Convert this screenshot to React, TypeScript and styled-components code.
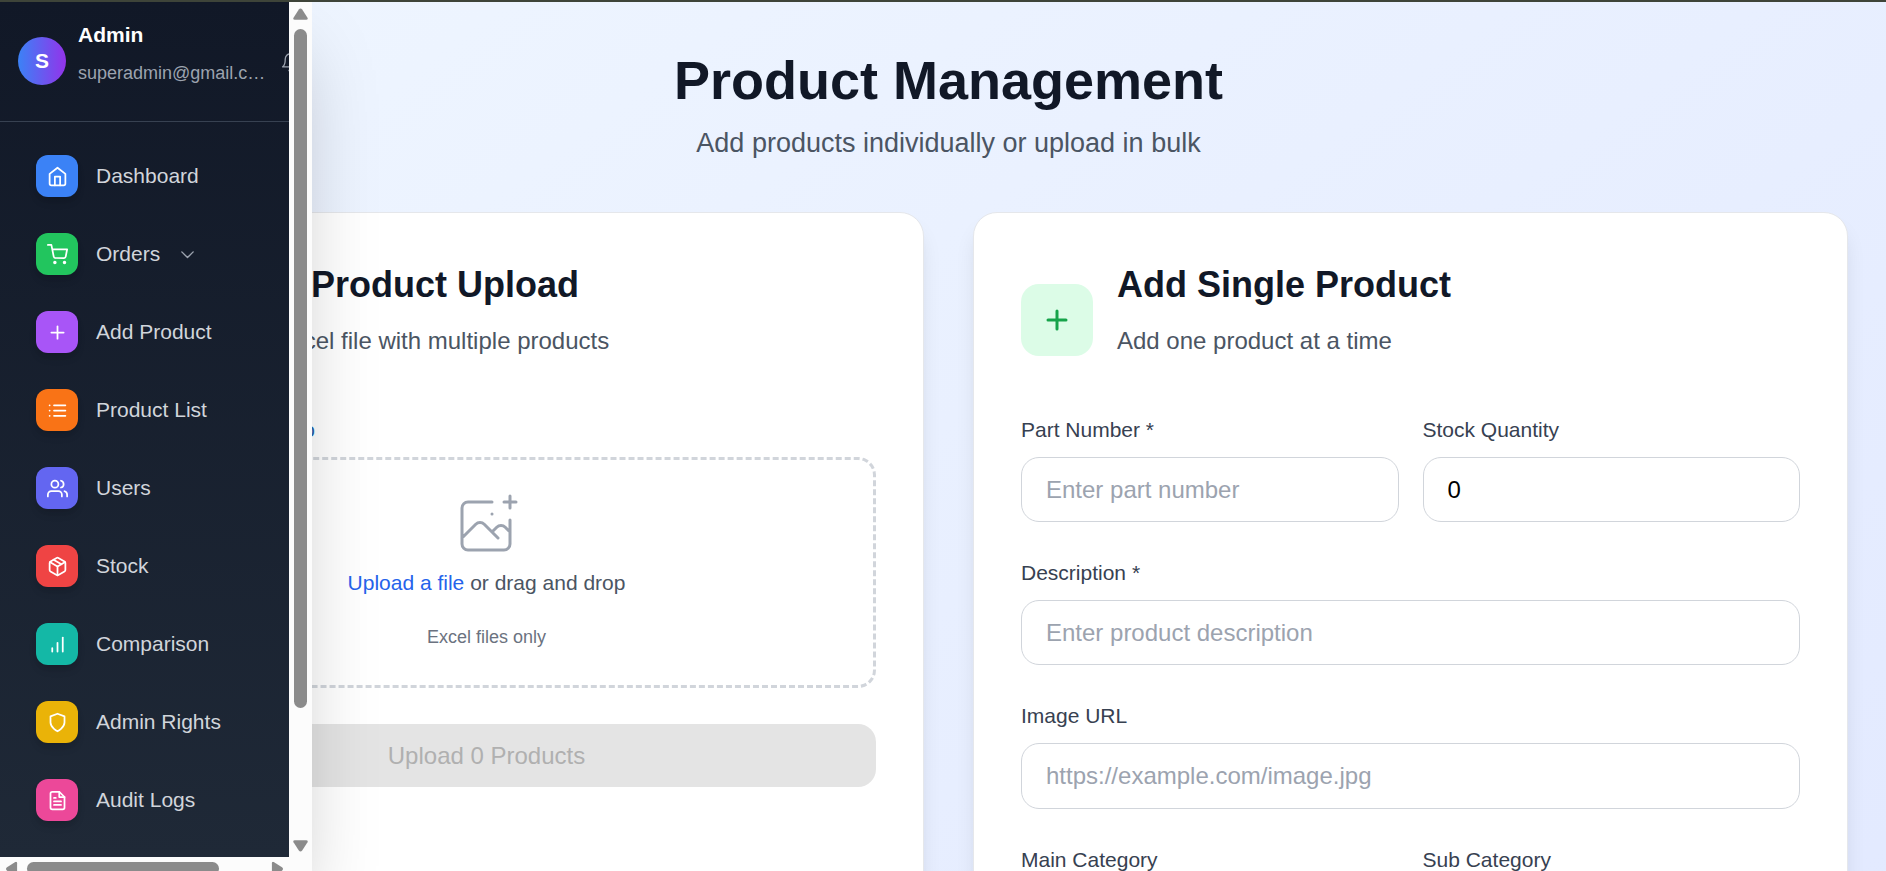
import React from "react";
import styled, { createGlobalStyle, css } from "styled-components";
import {
  FiHome,
  FiShoppingCart,
  FiPlus,
  FiList,
  FiUsers,
  FiPackage,
  FiBarChart,
  FiShield,
  FiFileText,
  FiBell,
} from "react-icons/fi";

const GlobalStyle = createGlobalStyle`
  *, *::before, *::after { box-sizing: border-box; }
  body {
    margin: 0;
    overflow: hidden;
    font-family: "Liberation Sans", Arial, sans-serif;
    font-size: 24px;
    line-height: 36px;
  }
  h1, h2, p { margin: 0; }
`;

const Page = styled.div`
  position: relative;
  height: 871px;
  overflow: hidden;
  border-top: 2px solid #3e4439;
`;

const Main = styled.main`
  height: 1400px;
  padding: 47.5px 38px 0 49px;
  background: linear-gradient(to bottom right, #eff6ff, #e0e7ff);
`;

const Header = styled.header`
  text-align: center;
  height: 162.5px;
`;

const PageTitle = styled.h1`
  font-size: 54px;
  line-height: 60px;
  font-weight: 700;
  color: #111827;
`;

const PageSubtitle = styled.p`
  margin-top: 12.5px;
  font-size: 27px;
  line-height: 42px;
  color: #4b5563;
`;

const Columns = styled.div`
  display: grid;
  grid-template-columns: 1fr 1fr;
  gap: 49px;
`;

const Card = styled.section`
  height: 1150px;
  padding: 48px 47px;
  background: #fff;
  border: 1px solid #e5e7eb;
  border-radius: 24px;
  box-shadow: 0 15px 22px -4px rgba(0, 0, 0, 0.1), 0 6px 9px -6px rgba(0, 0, 0, 0.1);
`;

const CardHeader = styled.div`
  display: flex;
  align-items: center;
  gap: 24px;
  height: 118px;
  margin-bottom: 36px;
`;

const Badge = styled.div<{ $bg: string; $fg: string }>`
  display: flex;
  align-items: center;
  justify-content: center;
  width: 72px;
  height: 72px;
  flex: none;
  border-radius: 18px;
  background: ${(p) => p.$bg};
  color: ${(p) => p.$fg};
`;

const CardTitle = styled.h2<{ $indent?: number }>`
  padding-left: ${(p) => p.$indent ?? 0}px;
  font-size: 36px;
  line-height: 48px;
  font-weight: 700;
  color: #111827;
`;

const CardText = styled.p`
  margin-top: 14px;
  color: #4b5563;
`;

const CardHeading = styled.div`
  height: 118px;
`;

const labelText = css`
  display: block;
  font-size: 21px;
  line-height: 30px;
  color: #374151;
`;

const Label = styled.label`
  ${labelText}
  margin-bottom: 12px;
`;

const FileLabel = styled.label`
  ${labelText}
  width: 218px;
  margin-bottom: 12px;
  color: #2563a8;
  text-align: right;
  white-space: nowrap;
`;

const DropZone = styled.div`
  display: flex;
  flex-direction: column;
  align-items: center;
  height: 231px;
  padding-top: 30px;
  border: 3px dashed #d1d5db;
  border-radius: 18px;
`;

const DropPicture = styled.svg`
  display: block;
  flex: none;
  margin-right: 1px;
`;

const DropText = styled.p`
  margin-top: 6px;
  font-size: 21px;
  line-height: 30px;
  color: #4b5563;

  span { color: #2563eb; }
`;

const DropHint = styled.p`
  margin-top: 27px;
  font-size: 18px;
  line-height: 24px;
  color: #6b7280;
`;

const UploadButton = styled.button`
  display: block;
  width: 100%;
  height: 63px;
  margin-top: 36px;
  padding: 0;
  border: 0;
  border-radius: 18px;
  background: #e4e4e4;
  color: #b0b0b0;
  font: inherit;
`;

const FieldRow = styled.div`
  display: grid;
  grid-template-columns: 1fr 1fr;
  gap: 24px;
`;

const Field = styled.div`
  margin-bottom: 36px;
`;

const Input = styled.input`
  display: block;
  width: 100%;
  height: 65.2px;
  padding: 0 24px;
  border: 1px solid #d1d5db;
  border-radius: 18px;
  background: #fff;
  color: #000;
  font: inherit;
  outline: none;

  &::placeholder { color: #9ca3af; opacity: 1; }
`;

const Drawer = styled.aside`
  position: absolute;
  top: 0;
  left: 0;
  width: 312px;
  height: 882px;
  display: grid;
  grid-template-columns: 289px 23px;
  grid-template-rows: 855px 27px;
  background: #fcfcfc;
  box-shadow: 0 37px 75px -18px rgba(0, 0, 0, 0.25);
`;

const DrawerBody = styled.div`
  overflow: hidden;
  background: linear-gradient(to bottom, #111827, #1f2937);
`;

const Profile = styled.div`
  display: flex;
  width: 330px;
  height: 120px;
  padding: 17px 0 0 18px;
  border-bottom: 1px solid #374151;
`;

const Avatar = styled.div`
  display: flex;
  align-items: center;
  justify-content: center;
  width: 48px;
  height: 48px;
  margin: 18px 12px 0 0;
  border-radius: 50%;
  background: linear-gradient(to right, #3b82f6, #9333ea);
  color: #fff;
  font-size: 21px;
  font-weight: 700;
`;

const ProfileName = styled.p`
  font-size: 21px;
  line-height: 32px;
  font-weight: 700;
  color: #fff;
`;

const ProfileMail = styled.p`
  width: 188px;
  margin-top: 8px;
  font-size: 18px;
  line-height: 28px;
  color: #9ca3af;
  overflow: hidden;
  text-overflow: ellipsis;
  white-space: nowrap;
`;

const Bell = styled.div`
  margin: 33px 0 0 14px;
  color: #9ca3af;
  line-height: 0;
`;

const Nav = styled.nav`
  display: flex;
  flex-direction: column;
  gap: 12px;
  padding: 21px 18px;
`;

const NavItem = styled.a`
  display: flex;
  align-items: center;
  height: 66px;
  padding: 0 18px;
  color: #d1d5db;
  font-size: 21px;
`;

const NavIcon = styled.span<{ $bg: string }>`
  display: flex;
  align-items: center;
  justify-content: center;
  width: 42px;
  height: 42px;
  margin-right: 18px;
  border-radius: 12px;
  background: ${(p) => p.$bg};
  color: #fff;
  box-shadow: 0 6px 9px -1px rgba(0, 0, 0, 0.1), 0 3px 6px -2px rgba(0, 0, 0, 0.1);
`;

const Chevron = styled.span`
  display: flex;
  margin-left: 16.5px;
  color: #9ca3af;
`;

const VerticalBar = styled.div`
  display: flex;
  flex-direction: column;
  align-items: center;
  padding-top: 6px;
`;

const VerticalThumb = styled.div`
  width: 13px;
  height: 679px;
  margin: 9px 0 132px;
  border-radius: 7px;
  background: #8b8b8b;
`;

const HorizontalBar = styled.div`
  display: flex;
  align-items: center;
  padding: 0 0 4px 4px;
`;

const HorizontalThumb = styled.div`
  width: 192px;
  height: 13px;
  margin: 0 51px 0 8px;
  border-radius: 7px;
  background: #8b8b8b;
`;

const ArrowIcon = styled.svg<{ $turn: number }>`
  display: block;
  flex: none;
  transform: rotate(${(p) => p.$turn}deg);
`;

const Arrow = ({ turn }: { turn: number }) => (
  <ArrowIcon $turn={turn} width="15" height="12" viewBox="0 0 15 12">
    <path d="M5.8 1.5L0.5 9.8Q-0.3 11.7 1.8 11.7H13.2Q15.3 11.7 14.5 9.8L9.2 1.5Q7.5 -0.5 5.8 1.5Z" fill="#8b8b8b" />
  </ArrowIcon>
);

const UploadPicture = () => (
  <DropPicture width="72" height="72" viewBox="0 0 48 48" fill="none" stroke="#9ca3af" strokeWidth="2" strokeLinecap="round" strokeLinejoin="round">
    <path d="M28 8H12a4 4 0 00-4 4v20m32-12v8m0 0v8a4 4 0 01-4 4H12a4 4 0 01-4-4v-4m32-4l-3.172-3.172a4 4 0 00-5.656 0L28 28M8 32l9.172-9.172a4 4 0 015.656 0L28 28m0 0l4 4m4-24h8m-4-4v8m-12 4h.02" />
  </DropPicture>
);

const AddIcon = () => (
  <svg width="36" height="36" viewBox="0 0 24 24" fill="none" stroke="currentColor" strokeWidth="2" strokeLinecap="round">
    <path d="M12 6v12M6 12h12" />
  </svg>
);

const ExpandIcon = () => (
  <svg width="21" height="21" viewBox="0 0 24 24" fill="none" stroke="currentColor" strokeWidth="1.6" strokeLinecap="round" strokeLinejoin="round">
    <path d="M18.5 9L12 15.5L5.5 9" />
  </svg>
);

const navItems = [
  { label: "Dashboard", color: "#3b82f6", Icon: FiHome },
  { label: "Orders", color: "#22c55e", Icon: FiShoppingCart, expandable: true },
  { label: "Add Product", color: "#a855f7", Icon: FiPlus },
  { label: "Product List", color: "#f97316", Icon: FiList },
  { label: "Users", color: "#6366f1", Icon: FiUsers },
  { label: "Stock", color: "#ef4444", Icon: FiPackage },
  { label: "Comparison", color: "#14b8a6", Icon: FiBarChart },
  { label: "Admin Rights", color: "#eab308", Icon: FiShield },
  { label: "Audit Logs", color: "#ec4899", Icon: FiFileText },
];

const Sidebar = () => (
  <Drawer>
    <DrawerBody>
      <Profile>
        <Avatar>S</Avatar>
        <div>
          <ProfileName>Admin</ProfileName>
          <ProfileMail>superadmin@gmail.com</ProfileMail>
        </div>
        <Bell>
          <FiBell size={21} strokeWidth={1.5} />
        </Bell>
      </Profile>
      <Nav>
        {navItems.map(({ label, color, Icon, expandable }) => (
          <NavItem key={label}>
            <NavIcon $bg={color}>
              <Icon size={21} />
            </NavIcon>
            {label}
            {expandable && (
              <Chevron>
                <ExpandIcon />
              </Chevron>
            )}
          </NavItem>
        ))}
      </Nav>
    </DrawerBody>
    <VerticalBar>
      <Arrow turn={0} />
      <VerticalThumb />
      <Arrow turn={180} />
    </VerticalBar>
    <HorizontalBar>
      <Arrow turn={-90} />
      <HorizontalThumb />
      <Arrow turn={90} />
    </HorizontalBar>
  </Drawer>
);

type TextFieldProps = { label: string; placeholder?: string; value?: string };

const TextField = ({ label, placeholder, value }: TextFieldProps) => (
  <Field>
    <Label>{label}</Label>
    <Input placeholder={placeholder} defaultValue={value} />
  </Field>
);

export default function App() {
  return (
    <>
      <GlobalStyle />
      <Page>
        <Main>
          <Header>
            <PageTitle>Product Management</PageTitle>
            <PageSubtitle>Add products individually or upload in bulk</PageSubtitle>
          </Header>
          <Columns>
            <Card>
              <CardHeader>
                <Badge $bg="#dbeafe" $fg="#2563eb" />
                <CardHeading>
                  <CardTitle $indent={30}>Bulk Product Upload</CardTitle>
                  <CardText>Upload Excel file with multiple products</CardText>
                </CardHeading>
              </CardHeader>
              <FileLabel>Product File Info</FileLabel>
              <DropZone>
                <UploadPicture />
                <DropText>
                  <span>Upload a file</span> or drag and drop
                </DropText>
                <DropHint>Excel files only</DropHint>
              </DropZone>
              <UploadButton disabled>Upload 0 Products</UploadButton>
            </Card>
            <Card>
              <CardHeader>
                <Badge $bg="#dcfce7" $fg="#16a34a">
                  <AddIcon />
                </Badge>
                <CardHeading>
                  <CardTitle>Add Single Product</CardTitle>
                  <CardText>Add one product at a time</CardText>
                </CardHeading>
              </CardHeader>
              <FieldRow>
                <TextField label="Part Number *" placeholder="Enter part number" />
                <TextField label="Stock Quantity" value="0" />
              </FieldRow>
              <TextField label="Description *" placeholder="Enter product description" />
              <TextField label="Image URL" placeholder="https://example.com/image.jpg" />
              <FieldRow>
                <TextField label="Main Category" />
                <TextField label="Sub Category" />
              </FieldRow>
            </Card>
          </Columns>
        </Main>
        <Sidebar />
      </Page>
    </>
  );
}
